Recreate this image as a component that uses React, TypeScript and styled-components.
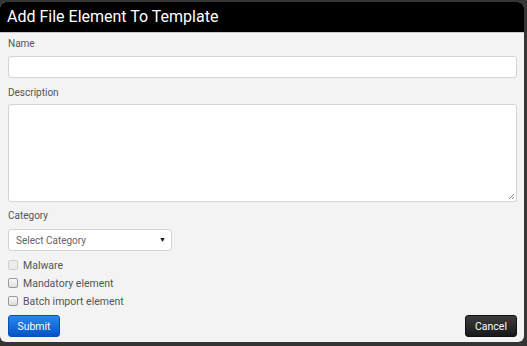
import styled, { createGlobalStyle } from 'styled-components'

const GlobalStyle = createGlobalStyle`
  *, *::before, *::after {
    box-sizing: border-box;
  }
  html, body {
    margin: 0;
    padding: 0;
    background: #353535;
    font-family: Roboto, "Liberation Sans", sans-serif;
  }
`

const Dialog = styled.div`
  margin-top: 2px;
  width: 524px;
  height: 340px;
  background: #f3f3f3;
  border-radius: 6px;
  overflow: hidden;
  display: flex;
  flex-direction: column;
`

const Header = styled.div`
  height: 31px;
  background: #000;
  color: #fff;
  font-size: 16px;
  line-height: 30px;
  padding-left: 7px;
  border-bottom: 1px solid #c8c8c8;
`

const Body = styled.div`
  flex: 1;
  display: flex;
  flex-direction: column;
  padding: 4px 7px 0 8px;
`

const Label = styled.div<{ $gap: number }>`
  font-size: 10px;
  color: #555;
  line-height: 14px;
  margin-bottom: ${p => p.$gap}px;
`

const TextInput = styled.div`
  height: 22px;
  background: #fff;
  border: 1px solid #d4d4d4;
  border-radius: 3px;
  margin-bottom: 8px;
`

const TextArea = styled.div`
  position: relative;
  height: 98px;
  background: #fff;
  border: 1px solid #d4d4d4;
  border-radius: 3px;
  margin-bottom: 7px;
`

const Grip = styled.svg`
  position: absolute;
  right: 1px;
  bottom: 1px;
`

const Select = styled.div`
  width: 164px;
  height: 22px;
  background: #fff;
  border: 1px solid #d4d4d4;
  border-radius: 3px;
  display: flex;
  align-items: center;
  justify-content: space-between;
  padding: 0 5px 0 7px;
  font-size: 10px;
  color: #666;
  margin-bottom: 5px;
`

const Arrow = styled.span`
  font-size: 7px;
  color: #111;
`

const CheckRow = styled.label`
  display: flex;
  align-items: center;
  gap: 5px;
  height: 18px;
  font-size: 10.5px;
  color: #555;
`

const Box = styled.span<{ $disabled?: boolean }>`
  width: 10px;
  height: 10px;
  border: 1px solid ${p => (p.$disabled ? '#cfcfcf' : '#9a9a9a')};
  border-radius: 2px;
  background: ${p => (p.$disabled ? '#ececec' : 'linear-gradient(#fafafa, #dcdcdc)')};
`

const Footer = styled.div`
  display: flex;
  justify-content: space-between;
  margin-top: 5px;
`

const Button = styled.button<{ $variant: 'primary' | 'dark' }>`
  height: 22px;
  width: 52px;
  padding: 0;
  border-radius: 3px;
  font-family: inherit;
  font-size: 10.5px;
  color: #fff;
  border: 1px solid ${p => (p.$variant === 'primary' ? '#0a4fb3' : '#111')};
  background: ${p =>
    p.$variant === 'primary'
      ? 'linear-gradient(#2a88f0, #0453c8)'
      : 'linear-gradient(#3c3c3c, #1a1a1a)'};
`

const App = () => {
  return (
    <>
      <GlobalStyle />
      <Dialog>
        <Header>Add File Element To Template</Header>
        <Body>
          <Label $gap={5}>Name</Label>
          <TextInput />
          <Label $gap={4}>Description</Label>
          <TextArea>
            <Grip width="7" height="7" viewBox="0 0 7 7">
              <path d="M6 1L1 6M6 4L4 6" stroke="#888" strokeWidth="1" />
            </Grip>
          </TextArea>
          <Label $gap={6}>Category</Label>
          <Select>
            Select Category
            <Arrow>▼</Arrow>
          </Select>
          <CheckRow>
            <Box $disabled />
            Malware
          </CheckRow>
          <CheckRow>
            <Box />
            Mandatory element
          </CheckRow>
          <CheckRow>
            <Box />
            Batch import element
          </CheckRow>
          <Footer>
            <Button $variant="primary">Submit</Button>
            <Button $variant="dark">Cancel</Button>
          </Footer>
        </Body>
      </Dialog>
    </>
  )
}

export default App
